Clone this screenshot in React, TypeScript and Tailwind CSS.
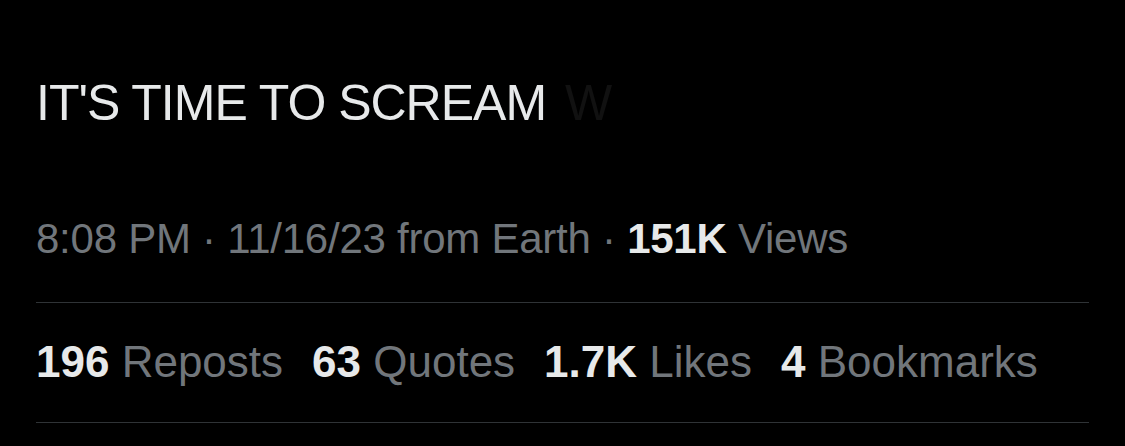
export default function App() {
  const font = { fontFamily: '"Liberation Sans", Arial, sans-serif' };
  return (
    <div className="w-[1125px] h-[446px] bg-black overflow-hidden" style={font}>
      <div className="px-[36px] pt-[78px]">
        <div className="text-[50px] leading-[50px] tracking-[-1px] text-[#e7e9ea] whitespace-nowrap">
          IT'S TIME TO SCREAM <span className="text-[#111111] ml-[6px]">W</span>
        </div>
        <div className="mt-[90px] text-[42px] leading-[42px] tracking-[-0.25px] text-[#71767b] whitespace-nowrap">
          8:08 PM · 11/16/23 from Earth · <span className="font-bold text-[#e7e9ea]">151K</span> Views
        </div>
        <div className="mt-[42px] h-px bg-[#2f3336]" />
        <div className="mt-[37px] flex gap-[29px] text-[44px] leading-[44px] text-[#71767b] whitespace-nowrap">
          <span><span className="font-bold text-[#e7e9ea]">196</span> Reposts</span>
          <span><span className="font-bold text-[#e7e9ea]">63</span> Quotes</span>
          <span><span className="font-bold text-[#e7e9ea]">1.7K</span> Likes</span>
          <span><span className="font-bold text-[#e7e9ea]">4</span> Bookmarks</span>
        </div>
        <div className="mt-[38px] h-px bg-[#2f3336]" />
      </div>
    </div>
  );
}
